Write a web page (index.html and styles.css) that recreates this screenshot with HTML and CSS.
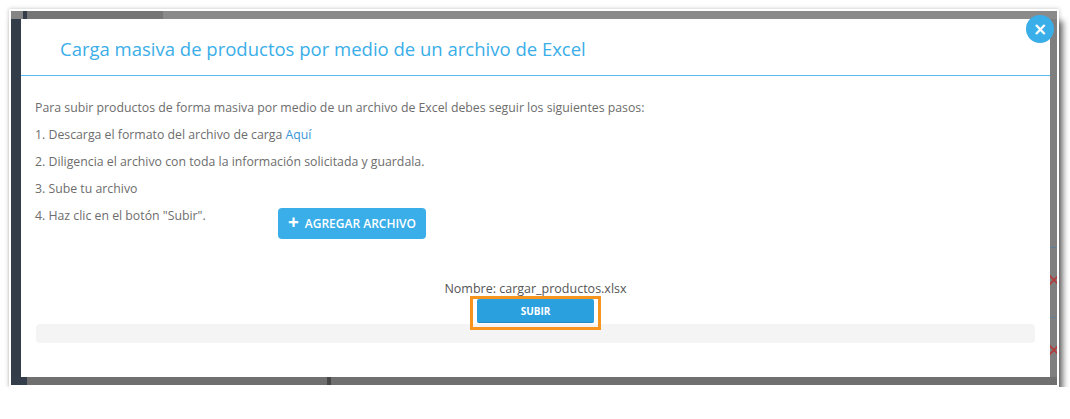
FILE: index.html
```html
<!DOCTYPE html>
<html>
<head>
	<meta name="viewport" content="width=device-width, initial-scale=1">
	<title>Carga masiva de productos</title>
<link rel="stylesheet" href="styles.css">
</head>
<body>

<div class="shot">
	<div class="backdrop">
		<div class="top-strip">
			<span class="ts-gray"></span>
			<span class="ts-dark"></span>
			<span class="ts-mid"></span>
			<span class="ts-light"></span>
		</div>

		<div class="side"></div>

		<div class="modal">
			<button class="close">&times;</button>

			<div class="modal-header">
				<h2>Carga masiva de productos por medio de un archivo de Excel</h2>
			</div>

			<div class="modal-body">
				<p>Para subir productos de forma masiva por medio de un archivo de Excel debes seguir los siguientes pasos:</p>
				<p>1. Descarga el formato del archivo de carga <a href="#">Aquí</a></p>
				<p>2. Diligencia el archivo con toda la información solicitada y guardala.</p>
				<p>3. Sube tu archivo</p>
				<div class="step-row">
					<p class="step-text">4. Haz clic en el botón "Subir".</p>
					<button class="btn-add"><span class="plus">+</span>AGREGAR ARCHIVO</button>
				</div>

				<div class="upload">
					<p class="file-name">Nombre: cargar_productos.xlsx</p>
					<span class="highlight"><button class="btn-upload">SUBIR</button></span>
				</div>
				<div class="progress"></div>
			</div>
		</div>

		<div class="right-strip">
			<div class="row-behind">
				<svg class="del" width="12" height="12" viewBox="0 0 12 12"><path d="M1 1L11 11M11 1L1 11" stroke="#b23a3a" stroke-width="1.6"/></svg>
			</div>
			<div class="row-behind">
				<svg class="del" width="12" height="12" viewBox="0 0 12 12"><path d="M1 1L11 11M11 1L1 11" stroke="#b23a3a" stroke-width="1.6"/></svg>
			</div>
		</div>

		<div class="bottom-strip">
			<span class="bs-dark"></span>
			<span class="bs-gray"></span>
			<span class="bs-mark"></span>
			<span class="bs-rest"></span>
		</div>
	</div>
</div>

</body>
</html>
```

FILE: styles.css
```css
body{
	margin: 0;
	padding: 0;
	background-color: white;
	font-family: "Open Sans", "Liberation Sans", sans-serif;
}

.shot{
	margin: 9px 0 0 9px;
	width: 1046px;
	border: 2px solid white;
	box-shadow: 4px 12px 6px rgba(0,0,0,0.55), 0 0 4px rgba(0,0,0,0.25);
}

.backdrop{
	display: grid;
	grid-template-columns: 10px 1029px 7px;
	grid-template-rows: 8px 358px 8px;
	background-color: #7f7f7f;
}

/* page behind the modal */
.top-strip{
	grid-column: 1 / 4;
	display: flex;
}
.ts-gray{ width: 12px; background-color: #858585; }
.ts-dark{ width: 4px; background-color: #353d48; }
.ts-mid{ width: 136px; background-color: #767676; }
.ts-light{ flex: 1; background-color: #8a8a8a; }

.side{
	background-color: #333d4a;
}

.bottom-strip{
	grid-column: 1 / 4;
	display: flex;
}
.bs-dark{ width: 16px; background-color: #343e4b; }
.bs-gray{ width: 300px; background-color: #6f6f6f; }
.bs-mark{ width: 4px; background-color: #474747; }
.bs-rest{ flex: 1; background-color: #707070; }

.right-strip{
	overflow: hidden;
	padding-top: 228px;
}
.row-behind{
	height: 69px;
	border-top: 1px solid #5f7f99;
	position: relative;
}
.del{
	position: absolute;
	left: -2px;
	top: 26px;
}

/* modal */
.modal{
	position: relative;
	background-color: white;
	display: flex;
	flex-direction: column;
}

.close{
	position: absolute;
	top: -4px;
	right: -4px;
	width: 28px;
	height: 28px;
	border-radius: 50%;
	border: 0;
	padding: 0;
	background-color: #3aaee8;
	color: white;
	font-family: "DejaVu Sans", sans-serif;
	font-size: 17px;
	font-weight: bold;
	line-height: 28px;
}

.modal-header{
	height: 56px;
	border-bottom: 1px solid #5cb9ec;
	padding-left: 39px;
	display: flex;
	align-items: center;
}

h2{
	margin: 2px 0 0 0;
	font-size: 18.5px;
	font-weight: normal;
	color: #3aaee8;
}

.modal-body{
	padding: 18px 15px 0 14px;
	display: flex;
	flex-direction: column;
	color: #6d6d6d;
	font-size: 12.3px;
}

p{
	margin: 0;
	line-height: 27px;
}

a{
	color: #3a96d6;
	text-decoration: none;
}

.step-row{
	display: flex;
	align-items: flex-start;
}

.step-text{
	width: 243px;
}

.btn-add{
	margin-top: 6px;
	width: 148px;
	height: 31px;
	border: 0;
	border-radius: 4px;
	background-color: #3aaee8;
	color: white;
	font-family: "Open Sans", "Liberation Sans", sans-serif;
	font-size: 12px;
	font-weight: 600;
	padding: 0;
	display: flex;
	align-items: center;
	justify-content: center;
	gap: 6px;
}

.plus{
	font-size: 19px;
	font-weight: bold;
	line-height: 19px;
	margin-top: -3px;
}

.upload{
	margin-top: 42px;
	display: flex;
	flex-direction: column;
	align-items: center;
	position: relative;
	z-index: 1;
	padding-left: 1px;
}

.file-name{
	line-height: 15px;
	color: #555555;
	font-size: 12.5px;
}

.highlight{
	display: block;
	width: 117px;
	padding: 0 4px 4px 4px;
	border: 3px solid #f7941d;
}

.btn-upload{
	display: block;
	width: 117px;
	height: 24px;
	border: 0;
	border-bottom: 1px solid #2486bd;
	border-radius: 2px;
	background-color: #2ba0de;
	color: white;
	font-family: "Open Sans", "Liberation Sans", sans-serif;
	font-size: 10px;
	font-weight: bold;
	padding: 0;
}

.progress{
	margin: -6px 0 0 1px;
	height: 19px;
	border-radius: 4px;
	background-color: #f4f4f4;
}
```
